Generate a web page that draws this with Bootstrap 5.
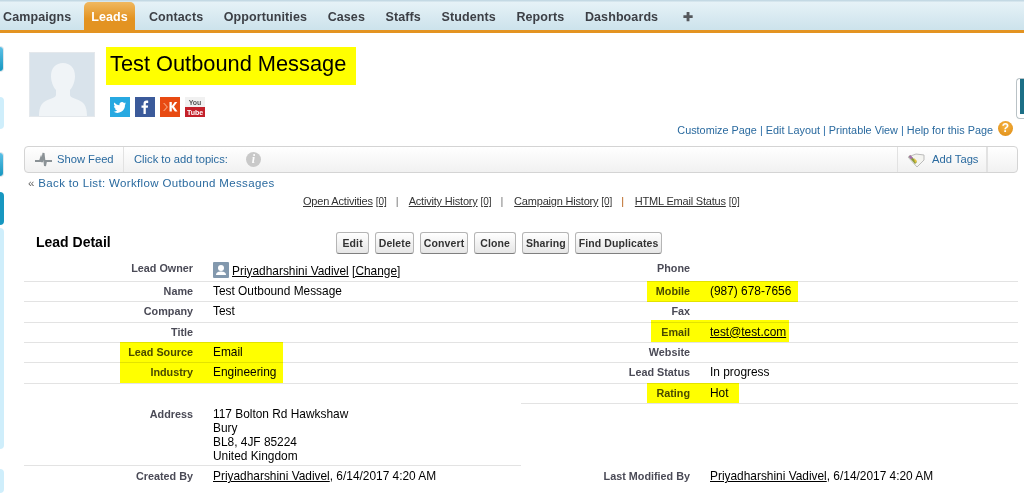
<!DOCTYPE html>
<html lang="en">
<head>
    <meta charset="UTF-8">
    <meta name="viewport" content="width=device-width, initial-scale=1.0">
    <title>Lead: Test Outbound Message</title>
    <link href="https://cdn.jsdelivr.net/npm/bootstrap@5.3.0/dist/css/bootstrap.min.css" rel="stylesheet">
    <style>
        html, body {
            height: 493px;
            overflow: hidden;
        }
        body {
            background: #fff;
            font-family: "Liberation Sans", Arial, sans-serif;
            font-size: 12px;
            color: #000;
            position: relative;
        }
        a { color: inherit; }

        /* tab bar */
        .tab-bar {
            height: 33px;
            background: linear-gradient(#c4d9e4 0, #c4d9e4 1px, #e6f2f7 2px, #cde3ec 29px);
            border-bottom: 3px solid #e39321;
            font-size: 12.5px;
            font-weight: 700;
            letter-spacing: .1px;
            color: #3c3f45;
            padding-left: 3px;
        }
        .tab-link {
            display: block;
            height: 28px;
            margin-top: 2px;
            padding-top: 7px;
            line-height: 16px;
            white-space: nowrap;
        }
        .tab-active {
            background: linear-gradient(#f0b860, #e39321 60%);
            border-radius: 5px 5px 0 0;
            color: #fff;
            padding: 7px 7px 0;
            margin: 2px 14px 0 13px;
        }
        .tab-gap { margin-right: 20.6px; }
        .tab-plus { margin-left: 4px; font-size: 12px; color: #55585c; }

        /* sidebar slivers on the left edge */
        .side-tab {
            position: absolute;
            left: 0;
            width: 4px;
            border-radius: 0 4px 4px 0;
            background: #cfeefb;
        }
        .side-lit {
            width: 3px;
            background: linear-gradient(#5cc0e6, #1797c0);
            box-shadow: 0 0 0 1px #dfe5e9;
        }
        .side-dark { background: #1797c0; }
        .side-a { top: 47px; height: 24px; }
        .side-b { top: 97px; height: 32px; }
        .side-c { top: 153px; height: 23px; }
        .side-d { top: 192px; height: 33px; }
        .side-e { top: 228px; height: 221px; }
        .side-f { top: 469px; height: 24px; }
        .peek-tab {
            position: absolute;
            left: 1016px;
            top: 78px;
            width: 8px;
            height: 41px;
            border: 1px solid #b9c2c6;
            border-right: 0;
            border-radius: 4px 0 0 4px;
            background: #fff;
        }
        .peek-tab::after {
            content: "";
            display: block;
            width: 4px;
            height: 35px;
            margin: 0 0 0 3px;
            background: #1c6f86;
        }

        /* heading */
        .page-head {
            height: 90px;
            padding: 19px 0 0 29px;
        }
        .avatar-box {
            width: 66px;
            height: 65px;
            background: #d9e3eb;
            border: 1px solid #e4e8ec;
            overflow: hidden;
        }
        .page-title {
            font-size: 21.8px;
            font-weight: 400;
            line-height: 28px;
            margin: 0;
            padding: 3px 0 0 4px;
        }
        .title-wrap { margin-left: 11px; margin-top: -5px; }
        .social-row { margin: 19px 0 0 4px; gap: 5px; }
        .social-ico { width: 20px; height: 20px; display: block; }

        .help-links {
            height: 15px;
            padding-right: 11px;
            color: #2a6ca8;
            font-size: 10.85px;
            line-height: 15px;
        }
        .help-links a { color: #2a6a9f; text-decoration: none; }
        .help-ico {
            width: 15px;
            height: 15px;
            border-radius: 50%;
            background: radial-gradient(circle at 50% 35%, #f6b443, #dd8a12);
            color: #fff;
            font-weight: 700;
            font-size: 12px;
            line-height: 15px;
            text-align: center;
            margin-left: 5px;
            margin-top: -2px;
        }

        /* feed strip */
        .feed-strip {
            margin: 8px 6px 0 24px;
            height: 27px;
            border: 1px solid #d4d4d4;
            border-radius: 4px;
            background: linear-gradient(#fff, #f1f1f1);
            color: #2a6a9f;
            font-size: 11.2px;
        }
        .feed-cell {
            display: flex;
            align-items: center;
            height: 100%;
            border-right: 2px solid #e2e2e2;
        }
        .feed-show { width: 99px; padding-left: 10px; gap: 5px; border-right-width: 1px; }
        .feed-topics { padding-left: 10px; gap: 18px; border: 0; flex: 1; }
        .feed-tags { width: 91px; padding-left: 9px; gap: 7px; border-left: 1px solid #e2e2e2; }
        .feed-end { width: 29px; border: 0; }
        .info-ico {
            width: 15px;
            height: 15px;
            border-radius: 50%;
            background: #c9c9c9;
            color: #fff;
            font: italic 700 12px/15px "Liberation Serif", serif;
            text-align: center;
        }

        .back-line {
            margin: 3px 0 0 28px;
            font-size: 11.5px;
            letter-spacing: .35px;
            line-height: 15px;
            color: #2a6a9f;
        }
        .back-line a { text-decoration: none; }
        .back-mark { color: #666; }

        .rel-list {
            margin-top: 3px;
            padding-left: 303px;
            line-height: 14px;
            font-size: 11px;
            color: #333;
            letter-spacing: -.2px;
            white-space: nowrap;
        }
        .rel-count { font-size: 10px; text-decoration: underline; letter-spacing: 0; }
        .rel-sep { margin: 0 8px 0 9px; color: #777; }
        .rel-sep-o { color: #b8621a; }

        /* detail */
        .detail-head {
            margin: 22px 0 0 36px;
            height: 23px;
        }
        .detail-title {
            width: 300px;
            font-size: 14px;
            font-weight: 700;
            margin: 0;
        }
        .sf-btns { gap: 6px; }
        .sf-btn {
            height: 22px;
            padding: 0 2.5px;
            font-size: 10.5px;
            font-weight: 700;
            line-height: 20px;
            color: #333;
            background: linear-gradient(#fff, #e6e6e6);
            border: 1px solid #b5b5b5;
            border-bottom-color: #7f7f7f;
            border-radius: 3px;
            letter-spacing: .1px;
        }
        .sf-btn-wide { padding: 0 5.5px; }
        .sf-btn:hover { color: #333; background: #eee; border-color: #999; }

        .detail-grid {
            margin: 7.5px 6px 0 24px;
            display: grid;
            grid-template-columns: 1fr 1fr;
            font-size: 11.9px;
            line-height: 14px;
        }
        .detail-row {
            display: flex;
            height: 20.4px;
            border-bottom: 1px solid #e3e3e3;
            padding-top: 2px;
        }
        .detail-row.row-first { padding-top: 0; }
        .row-first .detail-lbl { margin-top: -1px; }
        .detail-row.row-tall { height: 82.5px; padding-top: 23px; }
        .detail-row.row-spacer { height: 62.1px; border: 0; }
        .detail-row.row-none { border: 0; padding-top: 3px; }
        .detail-lbl {
            width: 169px;
            text-align: right;
            font-size: 10.8px;
            font-weight: 700;
            color: #4a4a56;
        }
        .detail-val { margin-left: 20px; white-space: nowrap; }
        .detail-val a { color: #000; }
        .owner-ico {
            display: inline-block;
            width: 16px;
            height: 16px;
            vertical-align: -3px;
            margin-right: 3px;
        }

        /* marker highlights laid over the screenshot */
        .hl {
            position: absolute;
            background: #ffff00;
            mix-blend-mode: multiply;
        }
        .hl-title { left: 106px; top: 47px; width: 250px; height: 38px; }
        .hl-source { left: 120px; top: 342px; width: 163px; height: 41px; }
        .hl-mobile { left: 647px; top: 281px; width: 151px; height: 21px; }
        .hl-email { left: 651px; top: 320px; width: 138px; height: 22px; }
        .hl-rating { left: 647px; top: 383px; width: 92px; height: 20px; }
    </style>
</head>
<body>
    <!-- Tabs -->
    <nav class="tab-bar d-flex">
        <a class="tab-link text-decoration-none" href="#">Campaigns</a>
        <a class="tab-link tab-active text-decoration-none" href="#">Leads</a>
        <a class="tab-link tab-gap text-decoration-none" href="#">Contacts</a>
        <a class="tab-link tab-gap text-decoration-none" href="#">Opportunities</a>
        <a class="tab-link tab-gap text-decoration-none" href="#">Cases</a>
        <a class="tab-link tab-gap text-decoration-none" href="#">Staffs</a>
        <a class="tab-link tab-gap text-decoration-none" href="#">Students</a>
        <a class="tab-link tab-gap text-decoration-none" href="#">Reports</a>
        <a class="tab-link tab-gap text-decoration-none" href="#">Dashboards</a>
        <a class="tab-link tab-plus text-decoration-none" href="#">✚</a>
    </nav>

    <!-- Page heading -->
    <div class="page-head d-flex">
        <div class="avatar-box flex-shrink-0">
            <svg width="66" height="65" viewBox="0 0 66 65">
                <path d="M33 10c-7 0-12 5-12 13 0 5 2 11 5 14v5c0 3-8 4-12 7-4 3-5 8-5 15h48c0-7-1-12-5-15-4-3-12-4-12-7v-5c3-3 5-9 5-14 0-8-5-13-12-13z" fill="#f0f4f7"/>
            </svg>
        </div>
        <div class="title-wrap">
            <h1 class="page-title">Test Outbound Message</h1>
            <div class="social-row d-flex">
                <svg class="social-ico" viewBox="0 0 20 20"><rect width="20" height="20" fill="#27a9e1"/><path d="M16 6.2c-.5.2-1 .4-1.500.4.500-.3 1-.8 1.200-1.400-.5.3-1.100.5-1.700.7a2.700 2.700 0 0 0-4.600 2.400C7.500 8.200 5.600 7.200 4.300 5.600c-.7 1.200-.4 2.800.8 3.600-.4 0-.8-.1-1.200-.3 0 1.300.9 2.400 2.100 2.700-.4.100-.8.100-1.200 0 .3 1.100 1.300 1.800 2.500 1.900A5.400 5.400 0 0 1 3.300 14.600 7.600 7.600 0 0 0 15 7.800c.4-.4.800-1 1-1.600z" fill="#fff"/></svg>
                <svg class="social-ico" viewBox="0 0 20 20"><rect width="20" height="20" fill="#3b5a9a"/><path d="M10.800 17v-6.200h2l.3-2.400h-2.300V7c0-.7.200-1.100 1.200-1.100h1.200V3.700c-.2 0-.9-.1-1.700-.1-1.800 0-3 1.100-3 3.100v1.700h-2v2.400h2V17z" fill="#fff"/></svg>
                <svg class="social-ico" viewBox="0 0 20 20"><rect width="20" height="20" fill="#e84a12"/><path d="M9.500 5h2.300v4l3-4h2.500l-3.300 4.600 3.500 5h-2.600l-3.100-4.300v4.300H9.500z" fill="#fff"/><path d="M3 6l3.500 4L3 14h1.500L8 10 4.500 6z" fill="#f59a70"/></svg>
                <svg class="social-ico" viewBox="0 0 20 20"><rect width="20" height="20" fill="#f1f1f1"/><rect y="10" width="20" height="10" fill="#c4202a"/><text x="10" y="8" font-size="7" font-weight="700" text-anchor="middle" fill="#555">You</text><text x="10" y="17.500" font-size="7" font-weight="700" text-anchor="middle" fill="#fff">Tube</text></svg>
            </div>
        </div>
    </div>

    <div class="help-links d-flex justify-content-end">
        <span><a href="#">Customize Page</a> | <a href="#">Edit Layout</a> | <a href="#">Printable View</a> | <a href="#">Help for this Page</a></span>
        <span class="help-ico">?</span>
    </div>

    <!-- Feed strip -->
    <div class="feed-strip d-flex">
        <div class="feed-cell feed-show">
            <svg width="17" height="15" viewBox="0 0 17 15"><path d="M0 9h5l1-3 1 4 1.500-9 1.500 13 1-5h6" fill="none" stroke="#8b9296" stroke-width="2"/></svg>
            <span>Show Feed</span>
        </div>
        <div class="feed-cell feed-topics">
            <span>Click to add topics:</span>
            <span class="info-ico">i</span>
        </div>
        <div class="feed-cell feed-tags">
            <svg width="18" height="16" viewBox="0 0 18 16"><path d="M1 5l8-3 8 1v5l-7 7z" fill="#f4f4f0" stroke="#bbb"/><path d="M3 3l7 7-2 2-6-7z" fill="#8a9a3a"/><path d="M3 3l3 3-2 1-2-2z" fill="#a56cb5"/><path d="M7 6l3 3-2 2z" fill="#e8c33a"/></svg>
            <span>Add Tags</span>
        </div>
        <div class="feed-cell feed-end"></div>
    </div>

    <div class="back-line"><span class="back-mark">«</span> <a href="#">Back to List: Workflow Outbound Messages</a></div>

    <div class="rel-list">
        <a href="#">Open Activities</a> <span class="rel-count">[0]</span><span class="rel-sep">|</span>
        <a href="#">Activity History</a> <span class="rel-count">[0]</span><span class="rel-sep">|</span>
        <a href="#">Campaign History</a> <span class="rel-count">[0]</span><span class="rel-sep rel-sep-o">|</span>
        <a href="#">HTML Email Status</a> <span class="rel-count">[0]</span>
    </div>

    <!-- Lead detail -->
    <div class="detail-head d-flex align-items-center">
        <h2 class="detail-title">Lead Detail</h2>
        <div class="d-flex sf-btns">
            <button class="btn sf-btn sf-btn-wide" type="button">Edit</button>
            <button class="btn sf-btn" type="button">Delete</button>
            <button class="btn sf-btn" type="button">Convert</button>
            <button class="btn sf-btn sf-btn-wide" type="button">Clone</button>
            <button class="btn sf-btn" type="button">Sharing</button>
            <button class="btn sf-btn" type="button">Find Duplicates</button>
        </div>
    </div>

    <div class="detail-grid">
        <div class="detail-col-l">
            <div class="detail-row row-first"><div class="detail-lbl">Lead Owner</div><div class="detail-val"><svg class="owner-ico" viewBox="0 0 16 16"><rect width="16" height="16" rx="1" fill="#8298ad"/><circle cx="8" cy="6" r="3" fill="#fff"/><path d="M3 13c0-3 3-3.500 5-3.500s5 .5 5 3.500z" fill="#fff"/></svg><a href="#">Priyadharshini Vadivel</a> <a href="#">[Change]</a></div></div>
            <div class="detail-row"><div class="detail-lbl">Name</div><div class="detail-val">Test Outbound Message</div></div>
            <div class="detail-row"><div class="detail-lbl">Company</div><div class="detail-val">Test</div></div>
            <div class="detail-row"><div class="detail-lbl">Title</div><div class="detail-val"></div></div>
            <div class="detail-row"><div class="detail-lbl">Lead Source</div><div class="detail-val">Email</div></div>
            <div class="detail-row"><div class="detail-lbl">Industry</div><div class="detail-val">Engineering</div></div>
            <div class="detail-row row-tall"><div class="detail-lbl">Address</div><div class="detail-val">117 Bolton Rd Hawkshaw<br>Bury<br>BL8, 4JF 85224<br>United Kingdom</div></div>
            <div class="detail-row row-none"><div class="detail-lbl">Created By</div><div class="detail-val"><a href="#">Priyadharshini Vadivel</a>, 6/14/2017 4:20 AM</div></div>
        </div>
        <div class="detail-col-r">
            <div class="detail-row row-first"><div class="detail-lbl">Phone</div><div class="detail-val"></div></div>
            <div class="detail-row"><div class="detail-lbl">Mobile</div><div class="detail-val">(987) 678-7656</div></div>
            <div class="detail-row"><div class="detail-lbl">Fax</div><div class="detail-val"></div></div>
            <div class="detail-row"><div class="detail-lbl">Email</div><div class="detail-val"><a href="#">test@test.com</a></div></div>
            <div class="detail-row"><div class="detail-lbl">Website</div><div class="detail-val"></div></div>
            <div class="detail-row"><div class="detail-lbl">Lead Status</div><div class="detail-val">In progress</div></div>
            <div class="detail-row"><div class="detail-lbl">Rating</div><div class="detail-val">Hot</div></div>
            <div class="detail-row row-spacer"></div>
            <div class="detail-row row-none"><div class="detail-lbl">Last Modified By</div><div class="detail-val"><a href="#">Priyadharshini Vadivel</a>, 6/14/2017 4:20 AM</div></div>
        </div>
    </div>

    <!-- Left edge slivers and right edge handle -->
    <div class="side-tab side-lit side-a"></div>
    <div class="side-tab side-b"></div>
    <div class="side-tab side-lit side-c"></div>
    <div class="side-tab side-dark side-d"></div>
    <div class="side-tab side-e"></div>
    <div class="side-tab side-f"></div>
    <div class="peek-tab"></div>

    <!-- Yellow marker over the fields -->
    <div class="hl hl-title"></div>
    <div class="hl hl-source"></div>
    <div class="hl hl-mobile"></div>
    <div class="hl hl-email"></div>
    <div class="hl hl-rating"></div>
</body>
</html>
